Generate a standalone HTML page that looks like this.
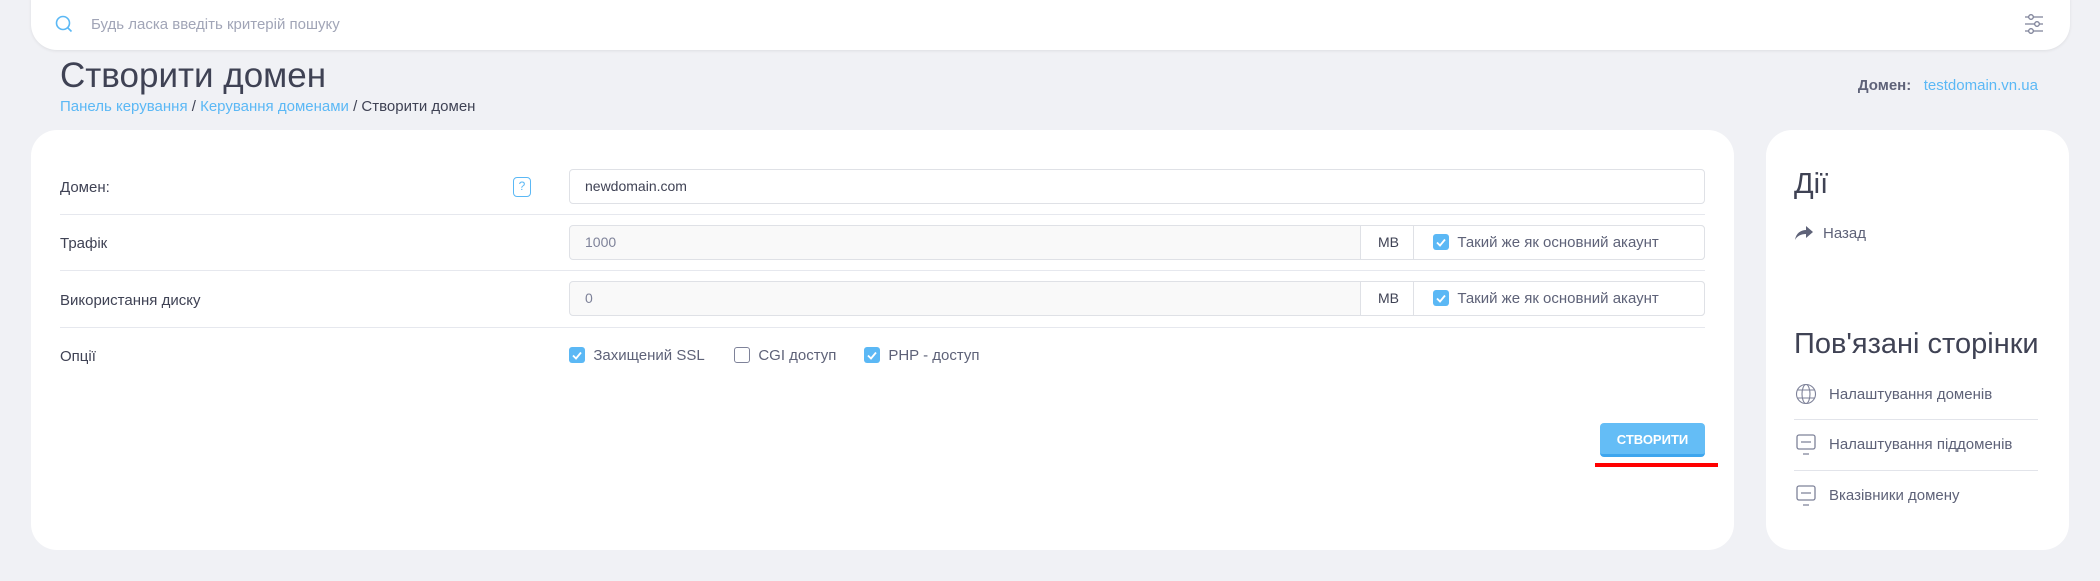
<!DOCTYPE html>
<html><head><meta charset="utf-8"><style>
*{box-sizing:border-box;margin:0;padding:0}
body{width:2100px;height:581px;background:#f0f1f5;font-family:"Liberation Sans",sans-serif;color:#3f4254;position:relative;overflow:hidden;font-size:15px}
.a{position:absolute}
.search{left:31px;top:-2px;width:2039px;height:52px;background:#fff;border-radius:0 0 26px 26px;box-shadow:0 1px 3px rgba(0,0,0,.08)}
.card{background:#fff;border-radius:26px}
.lbl{left:60px;font-size:15px;color:#3f4254}
.sep{left:60px;width:1645px;height:1px;background:#e6e8ee}
.inp{left:569px;width:1136px;height:35px;border:1px solid #dfe1e6;border-radius:4px;background:#fff;font-size:14px;padding:0 15px;line-height:33px;color:#3f4254}
.cb{width:16px;height:16px;border-radius:3px;background:#5bb8f5;display:inline-block}
.cb svg{display:block}
.link{left:1829px;font-size:15px;color:#5e6278}
</style></head><body>
<div class="a search"></div>
<svg class="a" style="left:55px;top:15px" width="18" height="18" viewBox="0 0 18 18"><circle cx="8" cy="8" r="6.5" fill="none" stroke="#5bb8f5" stroke-width="1.6"/><path d="M12.5 12.5L16.5 16.5" stroke="#5bb8f5" stroke-width="1.6"/></svg>
<div class="a" style="left:91px;top:16px;font-size:15px;color:#a1a5b7">Будь ласка введіть критерій пошуку</div>
<svg class="a" style="left:2024px;top:13px" width="20" height="22" viewBox="0 0 20 22" fill="none" stroke="#7e8299" stroke-width="1.3"><path d="M1 4h18M1 11h18M1 18h18"/><circle cx="7" cy="4" r="2.3" fill="#fff"/><circle cx="13" cy="11" r="2.3" fill="#fff"/><circle cx="7" cy="18" r="2.3" fill="#fff"/></svg>
<div class="a" style="left:60px;top:56px;font-size:35px;color:#3f4254">Створити домен</div>
<div class="a" style="left:60px;top:98px;font-size:15px"><span style="color:#5bb8f5">Панель керування</span> / <span style="color:#5bb8f5">Керування доменами</span> / Створити домен</div>
<div class="a" style="right:62px;top:77px;font-size:15px"><b style="color:#5e6278">Домен:</b>&nbsp;&nbsp; <span style="color:#5bb8f5">testdomain.vn.ua</span></div>

<div class="a card" style="left:31px;top:130px;width:1703px;height:420px"></div>
<div class="a card" style="left:1766px;top:130px;width:303px;height:420px"></div>

<div class="a lbl" style="top:179px">Домен:</div>
<div class="a" style="left:513px;top:177px;width:18px;height:20px;border:1.6px solid #5bb8f5;border-radius:4px;color:#5bb8f5;font-size:12px;text-align:center;line-height:17px">?</div>
<div class="a inp" style="top:169px">newdomain.com</div>
<div class="a sep" style="top:214px"></div>

<div class="a lbl" style="top:235px">Трафік</div>
<div class="a inp" style="top:225px;background:#f9f9f9;color:#7e8299">1000</div>
<div class="a sep" style="top:270px"></div>

<div class="a lbl" style="top:292px">Використання диску</div>
<div class="a inp" style="top:281px;background:#f9f9f9;color:#7e8299">0</div>
<div class="a sep" style="top:327px"></div>

<div class="a lbl" style="top:348px">Опції</div>

<div class="a" style="left:1360px;top:225px;width:345px;height:35px;border:1px solid #dfe1e6;border-radius:0 4px 4px 0;background:#fff"></div>
<div class="a" style="left:1413px;top:225px;width:1px;height:35px;background:#dfe1e6"></div>
<div class="a" style="left:1378px;top:234px;font-size:14px">MB</div>
<div class="a" style="left:1433px;top:234px"><span class="cb" style="vertical-align:-3px"><svg width="16" height="16"><path d="M4 8.5l3 3 5-6" stroke="#fff" stroke-width="1.8" fill="none"/></svg></span>&nbsp;&nbsp;<span style="color:#5e6278">Такий же як основний акаунт</span></div>
<div class="a" style="left:1360px;top:281px;width:345px;height:35px;border:1px solid #dfe1e6;border-radius:0 4px 4px 0;background:#fff"></div>
<div class="a" style="left:1413px;top:281px;width:1px;height:35px;background:#dfe1e6"></div>
<div class="a" style="left:1378px;top:290px;font-size:14px">MB</div>
<div class="a" style="left:1433px;top:290px"><span class="cb" style="vertical-align:-3px"><svg width="16" height="16"><path d="M4 8.5l3 3 5-6" stroke="#fff" stroke-width="1.8" fill="none"/></svg></span>&nbsp;&nbsp;<span style="color:#5e6278">Такий же як основний акаунт</span></div>

<div class="a" style="left:569px;top:347px;color:#5e6278"><span class="cb" style="vertical-align:-3px"><svg width="16" height="16"><path d="M4 8.5l3 3 5-6" stroke="#fff" stroke-width="1.8" fill="none"/></svg></span>&nbsp;&nbsp;Захищений SSL</div>
<div class="a" style="left:734px;top:347px;color:#5e6278"><span style="display:inline-block;width:16px;height:16px;border:1.5px solid #7e8299;border-radius:3px;vertical-align:-3px"></span>&nbsp;&nbsp;CGI доступ</div>
<div class="a" style="left:864px;top:347px;color:#5e6278"><span class="cb" style="vertical-align:-3px"><svg width="16" height="16"><path d="M4 8.5l3 3 5-6" stroke="#fff" stroke-width="1.8" fill="none"/></svg></span>&nbsp;&nbsp;PHP - доступ</div>

<div class="a" style="left:1600px;top:423px;width:105px;height:34px;background:#64bdf6;border-bottom:3px solid #3ea6ee;border-radius:4px;color:#fff;font-weight:bold;font-size:13px;text-align:center;line-height:34px">СТВОРИТИ</div>
<div class="a" style="left:1595px;top:463px;width:123px;height:4px;background:#f00"></div>

<div class="a" style="left:1794px;top:168px;font-size:29px;color:#3f4254">Дії</div>
<svg class="a" style="left:1794px;top:224px" width="20" height="18" viewBox="0 0 20 18"><path d="M1 16C2 9 7 6 12 6V2l7 6-7 6v-4C7 10 3 12 1 16z" fill="#5e6278"/></svg>
<div class="a" style="left:1823px;top:225px;color:#5e6278">Назад</div>
<div class="a" style="left:1794px;top:328px;font-size:29px;color:#3f4254">Пов'язані сторінки</div>
<svg class="a" style="left:1795px;top:383px" width="22" height="22" viewBox="0 0 22 22" fill="none" stroke="#7e8299" stroke-width="1.1"><circle cx="11" cy="11" r="9.5"/><ellipse cx="11" cy="11" rx="4" ry="9.5"/><path d="M2 7h18M2 15h18"/></svg>
<div class="a link" style="top:386px">Налаштування доменів</div>
<div class="a" style="left:1794px;top:419px;width:244px;height:1px;background:#e2e4ea"></div>
<svg class="a" style="left:1796px;top:434px" width="20" height="22" viewBox="0 0 20 22" fill="none" stroke="#7e8299" stroke-width="1.3"><rect x="1" y="1" width="18" height="14" rx="2"/><path d="M5 8h10M7 20h6"/></svg>
<div class="a link" style="top:436px">Налаштування піддоменів</div>
<div class="a" style="left:1794px;top:470px;width:244px;height:1px;background:#e2e4ea"></div>
<svg class="a" style="left:1796px;top:485px" width="20" height="22" viewBox="0 0 20 22" fill="none" stroke="#7e8299" stroke-width="1.3"><rect x="1" y="1" width="18" height="14" rx="2"/><path d="M5 8h10M7 20h6"/></svg>
<div class="a link" style="top:487px">Вказівники домену</div>
</body></html>
